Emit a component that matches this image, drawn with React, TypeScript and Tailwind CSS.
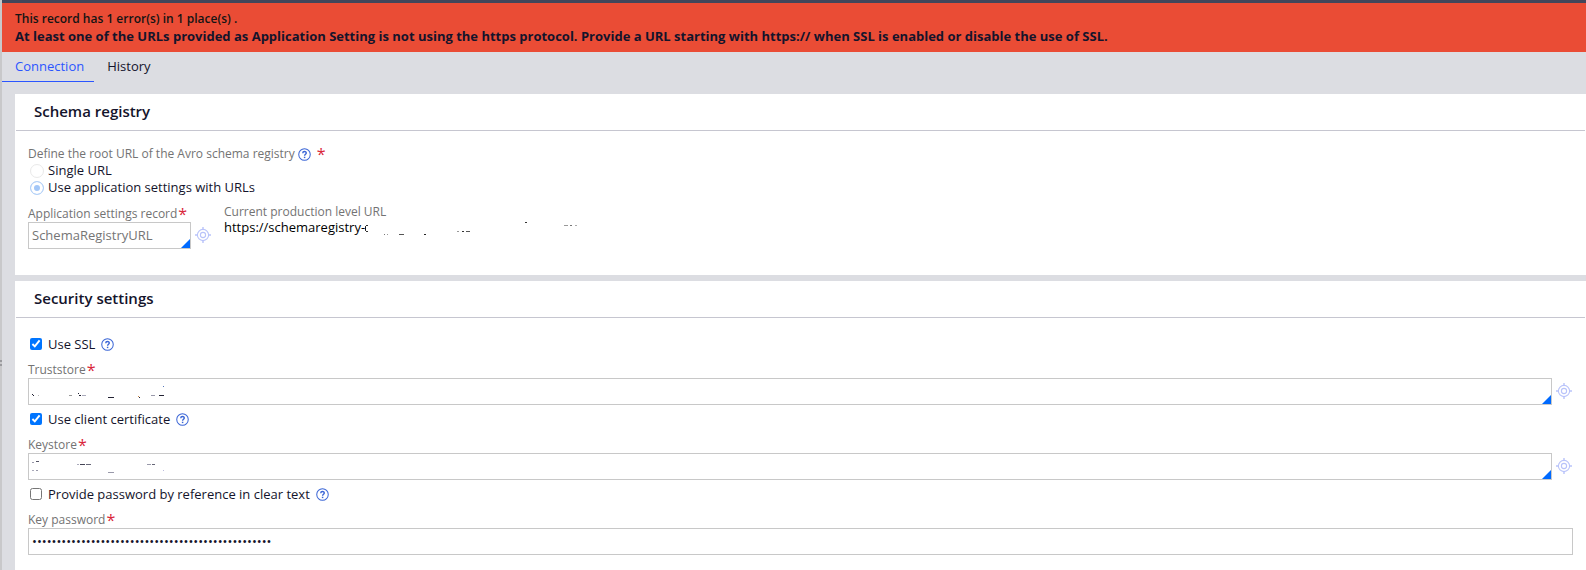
import React from 'react'

type Mark = [x: number, y: number, w: number, color: string]

const HelpIcon = () => (
  <svg viewBox="0 0 14 14" className="w-[13px] h-[13px]" fill="none" stroke="#3b66d6" aria-hidden="true">
    <circle cx="7" cy="7" r="6.2" strokeWidth="1.1" />
    <path d="M5.1 5.6C5.1 3.2 8.9 3.3 8.9 5.4C8.9 6.8 7.1 6.8 7.1 8.4" strokeWidth="1.5" />
    <path d="M7.1 9.4V10.9" strokeWidth="1.6" />
  </svg>
)

const Help = ({ label }: { label: string }) => (
  <button type="button" aria-label={label} className="flex items-center">
    <HelpIcon />
  </button>
)

const OpenRecord = ({ label }: { label: string }) => (
  <button type="button" aria-label={label} className="shrink-0 flex items-center pr-px pb-px">
    <svg viewBox="0 0 16 16" className="w-4 h-4" fill="none" stroke="#b9c3fa" aria-hidden="true">
      <circle cx="8" cy="8" r="5.6" strokeWidth="1.1" />
      <circle cx="8" cy="8" r="2.6" strokeWidth="1.1" />
      <path d="M8 0V2.4M8 13.6V16M0 8H2.4M13.6 8H16" strokeWidth="1.4" />
    </svg>
  </button>
)

const Required = () => (
  <span className="text-base leading-4 text-[#d9263a]" aria-hidden="true">*</span>
)

const Marks = ({ marks, className }: { marks: Mark[]; className: string }) => (
  <svg className={className} shapeRendering="crispEdges" aria-hidden="true">
    {marks.map(([x, y, w, color]) => (
      <rect key={`${x}-${y}`} x={x} y={y} width={w} height="1" fill={color} />
    ))}
  </svg>
)

const urlMarks: Mark[] = [
  [1, 5, 2, '#333'], [0, 6, 1, '#333'], [0, 7, 1, '#111'], [0, 8, 1, '#111'],
  [0, 9, 1, '#111'], [0, 10, 1, '#333'], [1, 11, 2, '#333'],
  [19, 14, 1, '#777'], [22, 14, 1, '#999'], [34, 14, 5, '#555'], [59, 14, 2, '#222'],
  [92, 11, 2, '#999'], [97, 11, 2, '#333'], [101, 11, 4, '#555'],
  [160, 2, 2, '#333'], [199, 5, 4, '#999'], [205, 5, 2, '#777'], [210, 5, 2, '#aaa'],
]

const truststoreMarks: Mark[] = [
  [4, 16, 1, '#223'], [5, 17, 1, '#223'], [10, 17, 1, '#bbb'], [41, 17, 3, '#999'],
  [50, 15, 1, '#223'], [51, 17, 2, '#223'], [54, 17, 4, '#aab'], [80, 19, 6, '#223'],
  [110, 18, 1, '#c84'], [111, 19, 1, '#223'], [123, 17, 4, '#99a'], [131, 17, 5, '#223'],
  [135, 8, 1, '#57b'],
]

const keystoreMarks: Mark[] = [
  [4, 9, 2, '#99a'], [8, 8, 3, '#556'], [4, 17, 2, '#aab'], [8, 17, 2, '#99a'],
  [49, 11, 2, '#aab'], [52, 11, 5, '#445'], [58, 11, 5, '#667'], [80, 19, 6, '#99a'],
  [119, 11, 4, '#99a'], [124, 11, 3, '#667'], [135, 17, 1, '#bbd'],
]

type FieldProps = {
  id: string
  label: string
  value?: string
  disabled?: boolean
  marks?: Mark[]
}

const FieldLabel = ({ id, label }: { id: string; label: string }) => (
  <label htmlFor={id} className="flex gap-px h-4 text-xs leading-4 text-[#737373]">
    {label}
    <Required />
  </label>
)

const RecordField = ({ id, label, value = '', disabled, marks }: FieldProps) => (
  <div>
    <FieldLabel id={id} label={label} />
    <div className="flex items-center gap-1">
      <div className="relative grow">
        <input
          id={id}
          type="text"
          defaultValue={value}
          disabled={disabled}
          className="block w-full h-[27px] px-[3px] pb-[2px] border border-[#c8c8c8] bg-white text-[13px] text-[#757575]"
        />
        {marks && <Marks marks={marks} className="absolute left-0 top-0 w-40 h-6" />}
        <svg viewBox="0 0 9 9" className="absolute right-px bottom-px w-[9px] h-[9px]" aria-hidden="true">
          <path d="M9 0V9H0Z" fill="#006aff" />
        </svg>
      </div>
      <OpenRecord label={`Open ${label}`} />
    </div>
  </div>
)

const Check = ({ id, label, checked }: { id: string; label: string; checked?: boolean }) => (
  <div className="flex items-center h-5">
    <input id={id} type="checkbox" defaultChecked={checked} className="w-3 h-3 ml-[2px] mr-[6px]" />
    <label htmlFor={id} className="mr-[6px]">{label}</label>
    <Help label={`Help for ${label}`} />
  </div>
)

const RootOption = ({ id, label, checked }: { id: string; label: string; checked?: boolean }) => (
  <div className="flex items-center">
    <input
      id={id}
      type="radio"
      name="root"
      disabled
      defaultChecked={checked}
      className="appearance-none w-[14px] h-[14px] ml-[2px] mr-1 rounded-full border border-[#e9e9e9] checked:border-[#b3d1f7] checked:bg-[#a3c7f8] checked:shadow-[inset_0_0_0_3px_white]"
    />
    <label htmlFor={id}>{label}</label>
  </div>
)

const Panel = ({ title, children }: { title: string; children: React.ReactNode }) => (
  <section className="bg-white">
    <h2 className="h-9 pl-[19px] text-[15px] leading-[34px] font-semibold">{title}</h2>
    <div className="mx-px border-t border-[#c6c6d0]">{children}</div>
  </section>
)

const App = () => {
  return (
    <div className="min-h-screen flex bg-[#dcdde2] font-['Open_Sans',sans-serif] text-[13px] leading-[17px] text-[#14142b]">
      <div className="w-[2px] shrink-0 pt-[360px] flex flex-col gap-[2px] bg-[#c8c8ca]">
        <span className="h-[2px] bg-[#9a9a9e]" />
        <span className="h-[2px] bg-[#9a9a9e]" />
      </div>
      <div className="grow min-w-0">
        <div role="alert" className="border-t-[3px] border-[#43465a] bg-[#ea4c35] h-[52px] pl-[13px] pt-[7px]">
          <p className="text-xs leading-[18px] font-semibold text-[#141414]">This record has 1 error(s) in 1 place(s) .</p>
          <p className="font-bold">
            At least one of the URLs provided as Application Setting is not using the https protocol. Provide a URL starting with https:// when SSL is enabled or disable the use of SSL.
          </p>
        </div>

        <nav className="flex h-[30px] leading-[29px]">
          <a href="#connection" className="pl-[13px] pr-[10px] border-b border-[#2b55ff] text-[#2b55ff]">Connection</a>
          <a href="#history" className="px-[13px]">History</a>
        </nav>

        <main className="pl-[13px] pt-3 flex flex-col gap-[6px]">
          <Panel title="Schema registry">
            <div className="pl-3 pt-[15px] pb-[26px]">
              <fieldset>
                <legend className="flex items-center h-4 text-xs text-[#737373]">
                  <span className="mr-[3px]">Define the root URL of the Avro schema registry</span>
                  <Help label="Help for root URL" />
                  <span className="ml-[6px] flex"><Required /></span>
                </legend>
                <RootOption id="single" label="Single URL" />
                <RootOption id="settings" label="Use application settings with URLs" checked />
              </fieldset>
              <div className="flex gap-3 pt-2">
                <div className="w-[184px] pt-[2px]">
                  <RecordField id="record" label="Application settings record" value="SchemaRegistryURL" disabled />
                </div>
                <div>
                  <div className="text-xs leading-4 text-[#737373]">Current production level URL</div>
                  <div className="flex leading-[15px] text-black">
                    <span>https://schemaregistry-</span>
                    <Marks marks={urlMarks} className="w-60 h-[15px]" />
                  </div>
                </div>
              </div>
            </div>
          </Panel>

          <Panel title="Security settings">
            <div className="pl-3 pr-3 pt-4 pb-[15px] flex flex-col gap-1">
              <Check id="ssl" label="Use SSL" checked />
              <div className="pt-1">
                <RecordField id="truststore" label="Truststore" marks={truststoreMarks} />
              </div>
              <Check id="cert" label="Use client certificate" checked />
              <div className="pt-1">
                <RecordField id="keystore" label="Keystore" marks={keystoreMarks} />
              </div>
              <Check id="reference" label="Provide password by reference in clear text" />
              <div className="pt-1">
                <FieldLabel id="password" label="Key password" />
                <input
                  id="password"
                  type="password"
                  defaultValue={'x'.repeat(49)}
                  className="block w-full h-[27px] px-[3px] pb-[2px] border border-[#c8c8c8] bg-white text-[13px]"
                />
              </div>
            </div>
          </Panel>
        </main>
      </div>
    </div>
  )
}

export default App
